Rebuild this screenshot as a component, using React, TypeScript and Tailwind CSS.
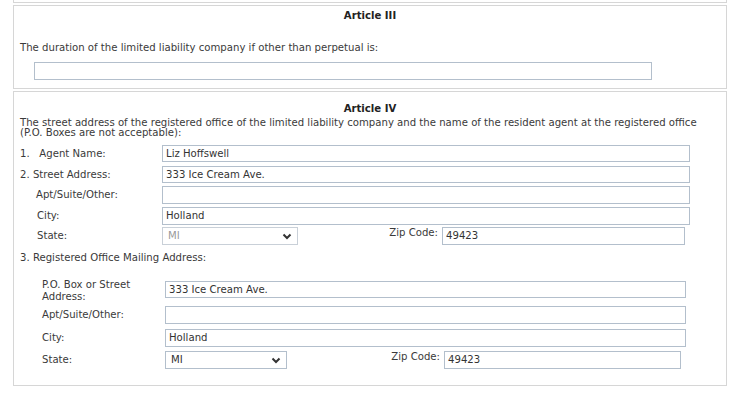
import React from 'react';

function Chevron() {
  return (
    <svg width="10" height="7" viewBox="0 0 10 7" className="shrink-0">
      <polyline points="1.5,1.5 5,5 8.5,1.5" fill="none" stroke="#333" strokeWidth="2" />
    </svg>
  );
}

function TextBox({ value, className }: { value?: string; className: string }) {
  return (
    <div className={`flex items-center border border-[#b3bfcc] bg-white pl-[3px] text-[#333] ${className}`}>
      {value}
    </div>
  );
}

function StateSelect({ value, disabled, className }: { value: string; disabled?: boolean; className: string }) {
  return (
    <div
      className={`flex items-center justify-between border bg-white pl-[5px] pr-[5px] ${
        disabled ? 'border-[#c9d0d8] text-[#9a9a9a]' : 'border-[#b3bfcc] text-[#333]'
      } ${className}`}
    >
      <span>{value}</span>
      <Chevron />
    </div>
  );
}

export default function App() {
  return (
    <div
      className="w-[750px] h-[393px] overflow-hidden bg-white text-[10.15px] leading-[12px] text-[#3a3a3a]"
      style={{ fontFamily: '"DejaVu Sans", Verdana, sans-serif' }}
    >
      <div className="ml-[13px] w-[714px] h-[3px] border-x border-b border-[#d6d6d6]" />

      {/* Article III */}
      <div className="ml-[13px] mt-[2px] w-[714px] h-[84px] border border-[#d6d6d6] flex flex-col">
        <div className="mt-[4px] h-[12px] text-center font-bold text-[#222]">Article III</div>
        <div className="mt-[20px] pl-[6px] h-[12px]">
          The duration of the limited liability company if other than perpetual is:
        </div>
        <TextBox className="mt-[8px] ml-[20px] w-[618px] h-[18px]" />
      </div>

      {/* Article IV */}
      <div className="ml-[13px] mt-[2px] w-[714px] h-[295px] border border-[#d6d6d6] flex flex-col">
        <div className="mt-[11px] h-[12px] text-center font-bold text-[#222]">Article IV</div>
        <div className="mt-[3px] pl-[6px] leading-[10px]">
          The street address of the registered office of the limited liability company and the name of the resident
          agent at the registered office
          <br />
          (P.O. Boxes are not acceptable):
        </div>

        <div className="mt-[7px] flex items-center pl-[6px]">
          <div className="w-[142px]">1.&nbsp;&nbsp; Agent Name:</div>
          <TextBox value="Liz Hoffswell" className="w-[528px] h-[17px]" />
        </div>
        <div className="mt-[4px] flex items-center pl-[6px]">
          <div className="w-[142px]">2. Street Address:</div>
          <TextBox value="333 Ice Cream Ave." className="w-[528px] h-[17px]" />
        </div>
        <div className="mt-[3px] flex items-center pl-[6px]">
          <div className="w-[142px] pl-[16px]">Apt/Suite/Other:</div>
          <TextBox className="w-[528px] h-[18px]" />
        </div>
        <div className="mt-[3px] flex items-center pl-[6px]">
          <div className="w-[142px] pl-[17px]">City:</div>
          <TextBox value="Holland" className="w-[528px] h-[18px]" />
        </div>
        <div className="mt-[2px] flex items-center pl-[6px]">
          <div className="w-[142px] pl-[17px]">State:</div>
          <StateSelect value="MI" disabled className="w-[136px] h-[18px]" />
          <div className="w-[144px] pr-[4px] text-right self-start">Zip Code:</div>
          <TextBox value="49423" className="w-[243px] h-[18px]" />
        </div>

        <div className="mt-[7px] pl-[6px] h-[12px]">3. Registered Office Mailing Address:</div>

        <div className="mt-[15px] flex items-start pl-[6px] h-[24px]">
          <div className="w-[145px] pl-[22px]">
            P.O. Box or Street
            <br />
            Address:
          </div>
          <TextBox value="333 Ice Cream Ave." className="w-[521px] h-[17px] mt-[2px]" />
        </div>
        <div className="mt-[3px] flex items-center pl-[6px]">
          <div className="w-[145px] pl-[22px]">Apt/Suite/Other:</div>
          <TextBox className="w-[521px] h-[18px]" />
        </div>
        <div className="mt-[5px] flex items-center pl-[6px]">
          <div className="w-[145px] pl-[22px]">City:</div>
          <TextBox value="Holland" className="w-[521px] h-[18px]" />
        </div>
        <div className="mt-[4px] flex items-center pl-[6px]">
          <div className="w-[145px] pl-[22px]">State:</div>
          <StateSelect value="MI" className="w-[122px] h-[18px]" />
          <div className="w-[157px] pr-[4px] text-right self-start">Zip Code:</div>
          <TextBox value="49423" className="w-[237px] h-[18px]" />
        </div>
      </div>
    </div>
  );
}
